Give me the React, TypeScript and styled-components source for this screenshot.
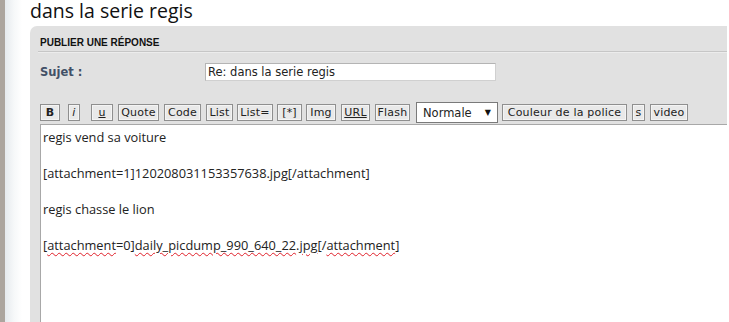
import styled, { createGlobalStyle } from 'styled-components';

const GlobalStyle = createGlobalStyle`
  html, body {
    margin: 0;
    padding: 0;
    background: #ffffff;
  }
  body {
    font-family: "DejaVu Sans", Verdana, sans-serif;
  }
`;

// label, width in px, extra space before it
const leftButtons = [
  { label: 'Quote', w: 41, before: 1 },
  { label: 'Code', w: 37, before: 1 },
  { label: 'List', w: 27, before: 1 },
  { label: 'List=', w: 36, before: 0 },
  { label: '[*]', w: 25, before: 0 },
  { label: 'Img', w: 30, before: 0 },
];

export default function App(): JSX.Element {
  return (
    <>
      <GlobalStyle />
      <Page>
        <SideEdge />
        <Content>
          <Title>dans la serie regis</Title>
          <Panel>
            <PanelHeader>PUBLIER UNE RÉPONSE</PanelHeader>
            <FieldRow>
              <FieldLabel>Sujet :</FieldLabel>
              <SubjectInput defaultValue="Re: dans la serie regis" />
            </FieldRow>
            <Toolbar>
              <ToolButton $w={20} $bold>B</ToolButton>
              <ToolButton $w={12} $before={4} $italic>i</ToolButton>
              <ToolButton $w={22} $before={7} $underline>u</ToolButton>
              {leftButtons.map((b) => (
                <ToolButton key={b.label} $w={b.w} $before={b.before}>
                  {b.label}
                </ToolButton>
              ))}
              <ToolButton $w={29} $before={1} $underline>URL</ToolButton>
              <ToolButton $w={35} $before={1}>Flash</ToolButton>
              <SizeSelect>
                <span>Normale</span>
                <Arrow>▼</Arrow>
              </SizeSelect>
              <ToolButton $w={125}>Couleur de la police</ToolButton>
              <ToolButton $w={13} $before={1}>s</ToolButton>
              <ToolButton $w={38} $before={1}>video</ToolButton>
            </Toolbar>
            <Editor>
              <Line>regis vend sa voiture</Line>
              <Line>&nbsp;</Line>
              <Line>[attachment=1]120208031153357638.jpg[/attachment]</Line>
              <Line>&nbsp;</Line>
              <Line>regis chasse le lion</Line>
              <Line>&nbsp;</Line>
              <Line>
                [<Typo>attachment</Typo>=0]<Typo>daily_picdump_990_640_22</Typo>.<Typo>jpg</Typo>[/
                <Typo>attachment</Typo>]
              </Line>
            </Editor>
          </Panel>
        </Content>
      </Page>
    </>
  );
}

const Page = styled.div`
  display: flex;
  height: 322px;
  overflow: hidden;
`;

const SideEdge = styled.div`
  width: 30px;
  flex: none;
  background: linear-gradient(
    to right,
    #aca59e 0,
    #aca59e 5px,
    #e6eaee 5px,
    #f6f8f9 14px,
    #ffffff 22px
  );
`;

const Content = styled.div`
  flex: 1;
  display: flex;
  flex-direction: column;
  padding-right: 2px;
  min-width: 0;
`;

const Title = styled.h2`
  margin: 0;
  height: 26px;
  font-family: "Open Sans", "DejaVu Sans", sans-serif;
  font-weight: normal;
  font-size: 19.5px;
  line-height: 22px;
  color: #111111;
  white-space: nowrap;
`;

const Panel = styled.div`
  flex: 1;
  display: flex;
  flex-direction: column;
  background: #e1e1e1;
  border-radius: 7px 0 0 0;
  padding-left: 8px;
`;

const PanelHeader = styled.div`
  height: 26px;
  padding: 11px 0 0 2px;
  box-sizing: border-box;
  border-bottom: 1px solid #c6c6c6;
  box-shadow: 0 1px 0 #ececec;
  font-family: "Liberation Sans", Arial, sans-serif;
  font-weight: bold;
  font-size: 10px;
  color: #111111;
`;

const FieldRow = styled.div`
  display: flex;
  align-items: center;
  padding: 11px 0 0 2px;
  height: 18px;
`;

const FieldLabel = styled.label`
  width: 165px;
  font-family: "DejaVu Sans", Verdana, sans-serif;
  font-weight: bold;
  font-size: 11.5px;
  color: #425067;
`;

const SubjectInput = styled.input`
  width: 291px;
  height: 18px;
  box-sizing: border-box;
  border: 1px solid #b4b4b4;
  border-right-color: #d0d0d0;
  border-bottom-color: #d0d0d0;
  padding: 0 2px;
  font-family: "DejaVu Sans", Verdana, sans-serif;
  font-size: 11.5px;
  color: #222222;
  background: #ffffff;
  outline: none;
`;

const Toolbar = styled.div`
  display: flex;
  align-items: center;
  gap: 4px;
  padding: 23px 0 0 2px;
  height: 17px;
  margin-bottom: 3px;
`;

const ToolButton = styled.span<{
  $w: number;
  $before?: number;
  $bold?: boolean;
  $italic?: boolean;
  $underline?: boolean;
}>`
  display: inline-flex;
  align-items: center;
  justify-content: center;
  flex: none;
  width: ${(p) => p.$w}px;
  margin-left: ${(p) => p.$before ?? 0}px;
  height: 17px;
  box-sizing: border-box;
  border: 1px solid #8f8f8f;
  box-shadow: inset 0 0 0 1px #f4f4f4;
  background: #e9e9e9;
  font-family: "DejaVu Sans", Verdana, sans-serif;
  font-size: 11px;
  letter-spacing: 0.2px;
  color: #222222;
  white-space: nowrap;
  font-weight: ${(p) => (p.$bold ? 'bold' : 'normal')};
  font-style: ${(p) => (p.$italic ? 'italic' : 'normal')};
  text-decoration: ${(p) => (p.$underline ? 'underline' : 'none')};
`;

const SizeSelect = styled.span`
  display: inline-flex;
  align-items: center;
  justify-content: space-between;
  flex: none;
  width: 82px;
  height: 21px;
  margin-left: 2px;
  box-sizing: border-box;
  padding: 0 6px 0 6px;
  border: 1px solid #7a7a7a;
  background: #ffffff;
  font-family: "DejaVu Sans", Verdana, sans-serif;
  font-size: 11.5px;
  color: #222222;
`;

const Arrow = styled.span`
  font-size: 8px;
  color: #111111;
`;

const Editor = styled.div`
  flex: 1;
  margin-left: 2px;
  background: #ffffff;
  border-top: 1px solid #a8a8a8;
  border-left: 1px solid #a8a8a8;
  padding: 3px 2px;
  font-family: "Open Sans", "DejaVu Sans", sans-serif;
  font-size: 12.8px;
  line-height: 18px;
  color: #222222;
`;

const Line = styled.div`
  white-space: nowrap;
`;

const Typo = styled.span`
  text-decoration: underline wavy #e0202a;
  text-decoration-thickness: 1px;
  text-underline-offset: 2px;
`;
